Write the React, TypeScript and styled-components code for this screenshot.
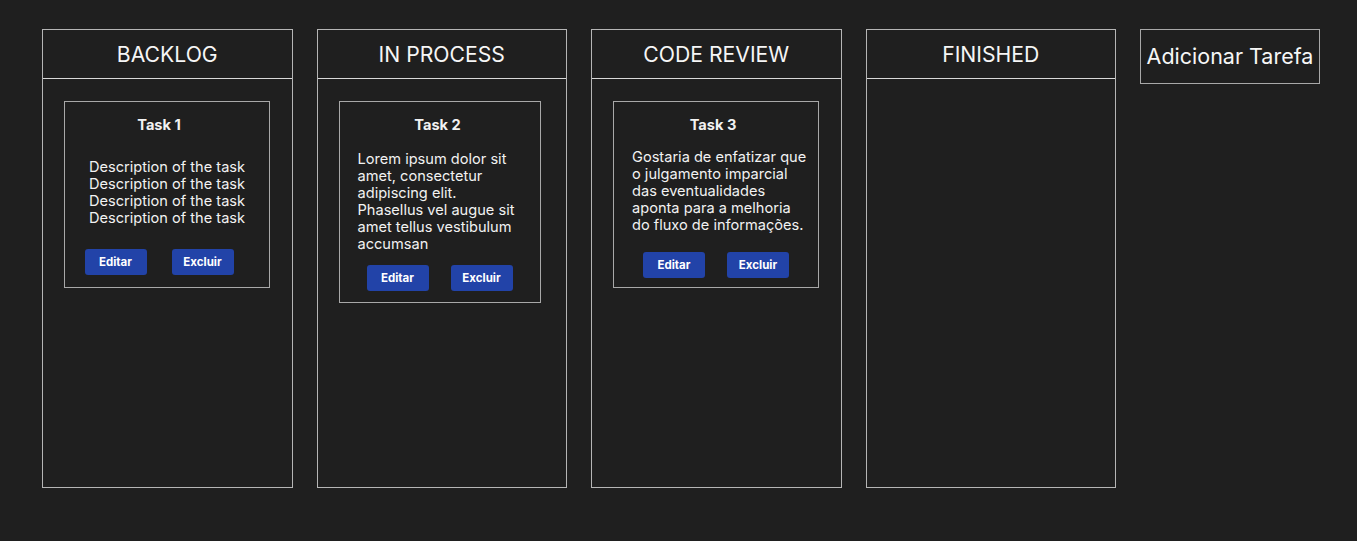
import styled, { createGlobalStyle } from "styled-components";

type Task = {
  id: number;
  titulo: string;
  descricao: string[];
  largura: number;
  centro?: boolean;
  recuo?: number;
  espacoTopo: number;
  espacoBotoes: number;
  espacoBase: number;
  vao?: number;
};

const colunas: { nome: string; tarefas: Task[] }[] = [
  {
    nome: "BACKLOG",
    tarefas: [
      {
        id: 1,
        titulo: "Task 1",
        descricao: [
          "Description of the task",
          "Description of the task",
          "Description of the task",
          "Description of the task",
        ],
        largura: 206,
        centro: true,
        recuo: 16,
        espacoTopo: 24,
        espacoBotoes: 22,
        espacoBase: 12,
        vao: 25,
      },
    ],
  },
  {
    nome: "IN PROCESS",
    tarefas: [
      {
        id: 2,
        titulo: "Task 2",
        descricao: [
          "Lorem ipsum dolor sit",
          "amet, consectetur",
          "adipiscing elit.",
          "Phasellus vel augue sit",
          "amet tellus vestibulum",
          "accumsan",
        ],
        largura: 202,
        recuo: 4,
        espacoTopo: 16,
        espacoBotoes: 12,
        espacoBase: 11,
      },
    ],
  },
  {
    nome: "CODE REVIEW",
    tarefas: [
      {
        id: 3,
        titulo: "Task 3",
        descricao: [
          "Gostaria de enfatizar que",
          "o julgamento imparcial",
          "das eventualidades",
          "aponta para a melhoria",
          "do fluxo de informações.",
        ],
        largura: 206,
        recuo: 6,
        espacoTopo: 14,
        espacoBotoes: 18,
        espacoBase: 9,
      },
    ],
  },
  { nome: "FINISHED", tarefas: [] },
];

export default function App() {
  return (
    <>
      <GlobalStyle />
      <QuadroStl>
        {colunas.map((coluna) => (
          <ColunaStl key={coluna.nome}>
            <CabecalhoStl>{coluna.nome}</CabecalhoStl>
            <ListaStl>
              {coluna.tarefas.map((t) => (
                <CardStl key={t.id} $largura={t.largura} $base={t.espacoBase}>
                  <TituloStl $recuo={t.recuo ?? 0}>{t.titulo}</TituloStl>
                  <DescricaoStl $centro={!!t.centro} $topo={t.espacoTopo}>
                    {t.descricao.map((linha, i) => (
                      <div key={i}>{linha}</div>
                    ))}
                  </DescricaoStl>
                  <AcoesStl
                    $topo={t.espacoBotoes}
                    $recuo={t.centro ? t.recuo ?? 0 : 0}
                    $vao={t.vao ?? 22}
                  >
                    <BotaoStl>Editar</BotaoStl>
                    <BotaoStl>Excluir</BotaoStl>
                  </AcoesStl>
                </CardStl>
              ))}
            </ListaStl>
          </ColunaStl>
        ))}
        <AdicionarStl>Adicionar Tarefa</AdicionarStl>
      </QuadroStl>
    </>
  );
}

const GlobalStyle = createGlobalStyle`
  body {
    margin: 0;
    background: #1f1f1f;
    color: #f2f2f2;
    font-family: Inter, "Noto Sans", sans-serif;
  }
`;

const QuadroStl = styled.div`
  display: flex;
  align-items: flex-start;
  gap: 24px;
  padding: 29px 0 0 42px;
  min-height: 541px;
  box-sizing: border-box;
`;

const ColunaStl = styled.div`
  width: 250.5px;
  height: 459px;
  flex-shrink: 0;
  box-sizing: border-box;
  border: 1px solid #b5b5b5;
  display: flex;
  flex-direction: column;
`;

const CabecalhoStl = styled.div`
  height: 48px;
  border-bottom: 1px solid #d8d8d8;
  display: flex;
  align-items: center;
  justify-content: center;
  font-size: 21.2px;
  font-weight: 400;
  color: #f6f6f6;
`;

const ListaStl = styled.div`
  display: flex;
  flex-direction: column;
  padding: 22px 21px;
`;

const CardStl = styled.div<{ $largura: number; $base: number }>`
  width: ${(p) => p.$largura}px;
  box-sizing: border-box;
  border: 1px solid #a8a8a8;
  padding: 13px 0 ${(p) => p.$base}px;
  display: flex;
  flex-direction: column;
`;

const TituloStl = styled.div<{ $recuo: number }>`
  text-align: center;
  font-size: 14.6px;
  font-weight: 700;
  line-height: 20px;
  padding-right: ${(p) => p.$recuo}px;
`;

const DescricaoStl = styled.div<{ $centro: boolean; $topo: number }>`
  margin-top: ${(p) => p.$topo}px;
  padding: ${(p) => (p.$centro ? "0" : "0 8px 0 18px")};
  font-size: 14.6px;
  line-height: 17px;
  white-space: nowrap;
  text-align: ${(p) => (p.$centro ? "center" : "left")};
`;

const AcoesStl = styled.div<{ $topo: number; $recuo: number; $vao: number }>`
  display: flex;
  justify-content: center;
  gap: ${(p) => p.$vao}px;
  margin-top: ${(p) => p.$topo}px;
  padding-right: ${(p) => p.$recuo}px;
`;

const BotaoStl = styled.button`
  width: 62px;
  height: 26px;
  border: none;
  border-radius: 3px;
  background: #2243a8;
  color: #ffffff;
  font-family: Inter, "Noto Sans", sans-serif;
  font-size: 11.5px;
  font-weight: 700;
  padding: 0;
  cursor: pointer;
`;

const AdicionarStl = styled.button`
  width: 180px;
  height: 55px;
  flex-shrink: 0;
  background: transparent;
  border: 1px solid #a8a8a8;
  color: #f6f6f6;
  font-family: Inter, "Noto Sans", sans-serif;
  font-size: 21.5px;
  font-weight: 400;
  padding: 0 0 2px;
`;
